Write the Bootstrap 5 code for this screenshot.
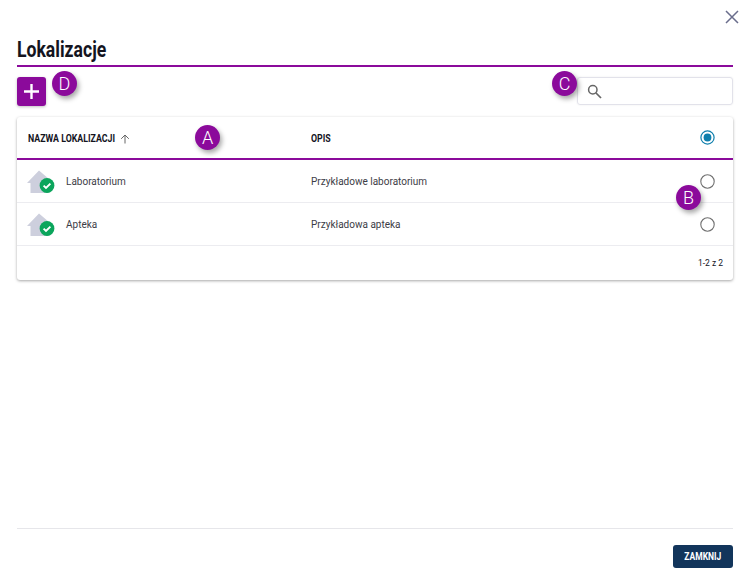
<!DOCTYPE html>
<html lang="pl">
<head>
  <meta charset="UTF-8">
  <meta name="viewport" content="width=device-width, initial-scale=1">
  <title>Lokalizacje</title>
  <link href="https://cdn.jsdelivr.net/npm/bootstrap@5.3.0/dist/css/bootstrap.min.css" rel="stylesheet">
  <style>
    body {
      font-family: Roboto, "Liberation Sans", sans-serif;
      background: #fff;
      color: #3c3c46;
      font-size: 10px;
    }
    .page-wrap {
      position: relative;
      height: 584px;
      padding: 0 17px;
    }
    .close-x {
      position: absolute;
      top: 10px;
      right: 11px;
      line-height: 0;
    }
    .page-title {
      font-size: 22px;
      font-weight: 700;
      color: #14141e;
      line-height: 24px;
      margin: 0;
      padding-top: 38px;
      padding-bottom: 3px;
      border-bottom: 2px solid #8b0a9b;
    }
    .squeeze {
      display: inline-block;
      transform: scaleX(.8);
      transform-origin: left center;
      white-space: nowrap;
    }
    .tool-row {
      height: 50px;
      padding-top: 10px;
    }
    .add-btn {
      width: 29px;
      height: 29px;
      background: #8b0a9b;
      border-radius: 3px;
      box-shadow: 0 1px 3px rgba(0,0,0,.25);
    }
    .search-box {
      width: 156px;
      height: 28px;
      border: 1px solid #e2e2ea;
      border-radius: 3px;
      box-shadow: 0 0 2px rgba(0,0,0,.08);
      padding-left: 9px;
    }
    .loc-card {
      height: 163px;
      border-radius: 3px;
      box-shadow: 0 1px 3px rgba(0,0,0,.35);
    }
    .loc-head {
      height: 43px;
      border-bottom: 2px solid #8b0a9b;
      font-size: 11px;
      font-weight: 700;
      color: #14141e;
    }
    .loc-head .squeeze { padding-top: 3px; }
    .name-head { margin-right: -17px; }
    .sort-arrow { margin-top: 2px; }
    .loc-row {
      height: 43px;
      border-bottom: 1px solid #ececf0;
    }
    .col-name { width: 294px; padding-left: 11px; }
    .col-opis { flex: 1; }
    .col-radio { width: 33px; line-height: 0; }
    .house { margin-left: -1px; }
    .name-text { margin-left: 11px; }
    .loc-foot {
      height: 34px;
      font-size: 8.5px;
      color: #14141e;
      padding-right: 10px;
    }
    .page-bottom {
      position: absolute;
      left: 17px;
      right: 17px;
      bottom: 0;
      height: 56px;
      border-top: 1px solid #e6e6ea;
    }
    .close-btn {
      width: 60px;
      height: 23px;
      margin-top: 16px;
      background: #12355b;
      color: #fff;
      font-size: 10px;
      font-weight: 700;
      border-radius: 3px;
    }
    .zam-text {
      display: inline-block;
      transform: scaleX(.85);
    }
    .hint {
      position: absolute;
      width: 25px;
      height: 25px;
      border-radius: 50%;
      background: #8b0a9b;
      color: #fff;
      font-size: 18px;
      font-weight: 300;
      line-height: 25px;
      text-align: center;
      box-shadow: 2px 3px 5px rgba(0,0,0,.35);
    }
  </style>
</head>
<body>
  <div class="page-wrap">
    <span class="close-x">
      <svg width="14" height="14" viewBox="0 0 14 14"><path d="M1 1 L13 13 M13 1 L1 13" stroke="#6a6d8c" stroke-width="1.5" fill="none"/></svg>
    </span>

    <h1 class="page-title"><span class="squeeze">Lokalizacje</span></h1>

    <div class="tool-row d-flex justify-content-between align-items-start">
      <div class="add-btn d-flex align-items-center justify-content-center">
        <svg width="17" height="17" viewBox="0 0 17 17"><path d="M8.5 1 V16 M1 8.5 H16" stroke="#fff" stroke-width="2.4"/></svg>
      </div>
      <div class="search-box d-flex align-items-center">
        <svg width="15" height="15" viewBox="0 0 15 15"><circle cx="5.8" cy="5.8" r="4.2" stroke="#666" stroke-width="1.5" fill="none"/><path d="M9 9 L14 14" stroke="#666" stroke-width="1.7"/></svg>
      </div>
    </div>

    <div class="loc-card">
      <div class="loc-head d-flex align-items-center">
        <div class="col-name d-flex align-items-center">
          <span class="squeeze name-head">NAZWA LOKALIZACJI</span>
          <svg class="sort-arrow" width="10" height="10" viewBox="0 0 10 10"><path d="M5 9.5 V1 M1.2 4.8 L5 1 L8.8 4.8" stroke="#666" stroke-width="1" fill="none"/></svg>
        </div>
        <div class="col-opis"><span class="squeeze">OPIS</span></div>
        <div class="col-radio">
          <svg width="15" height="15" viewBox="0 0 15 15"><circle cx="7.5" cy="7.5" r="6.6" stroke="#0f7fad" stroke-width="1.2" fill="none"/><circle cx="7.5" cy="7.5" r="3.9" fill="#0f7fad"/></svg>
        </div>
      </div>

      <div class="loc-row d-flex align-items-center">
        <div class="col-name d-flex align-items-center">
          <svg class="house" width="28" height="25" viewBox="0 0 28 25"><path d="M0 14 L12 1.5 L22 10 V24 H3.5 V14 Z" fill="#cdcfdd"/><circle cx="20" cy="16.5" r="7.4" fill="#0ba55c"/><path d="M16.6 16.6 L19 19 L23.4 14.6" stroke="#fff" stroke-width="1.9" fill="none"/></svg>
          <span class="name-text">Laboratorium</span>
        </div>
        <div class="col-opis">Przykładowe laboratorium</div>
        <div class="col-radio">
          <svg width="15" height="15" viewBox="0 0 15 15"><circle cx="7.5" cy="7.5" r="6.7" stroke="#707070" stroke-width="1.1" fill="none"/></svg>
        </div>
      </div>

      <div class="loc-row d-flex align-items-center">
        <div class="col-name d-flex align-items-center">
          <svg class="house" width="28" height="25" viewBox="0 0 28 25"><path d="M0 14 L12 1.5 L22 10 V24 H3.5 V14 Z" fill="#cdcfdd"/><circle cx="20" cy="16.5" r="7.4" fill="#0ba55c"/><path d="M16.6 16.6 L19 19 L23.4 14.6" stroke="#fff" stroke-width="1.9" fill="none"/></svg>
          <span class="name-text">Apteka</span>
        </div>
        <div class="col-opis">Przykładowa apteka</div>
        <div class="col-radio">
          <svg width="15" height="15" viewBox="0 0 15 15"><circle cx="7.5" cy="7.5" r="6.7" stroke="#707070" stroke-width="1.1" fill="none"/></svg>
        </div>
      </div>

      <div class="loc-foot d-flex align-items-center justify-content-end">1-2 z 2</div>
    </div>

    <div class="page-bottom d-flex justify-content-end">
      <button type="button" class="btn close-btn p-0 border-0"><span class="zam-text">ZAMKNIJ</span></button>
    </div>

    <span class="hint" style="left:195px;top:125px">A</span>
    <span class="hint" style="left:676px;top:185px">B</span>
    <span class="hint" style="left:552px;top:71px">C</span>
    <span class="hint" style="left:52px;top:71px">D</span>
  </div>

  <script src="https://cdn.jsdelivr.net/npm/bootstrap@5.3.0/dist/js/bootstrap.bundle.min.js"></script>
</body>
</html>
